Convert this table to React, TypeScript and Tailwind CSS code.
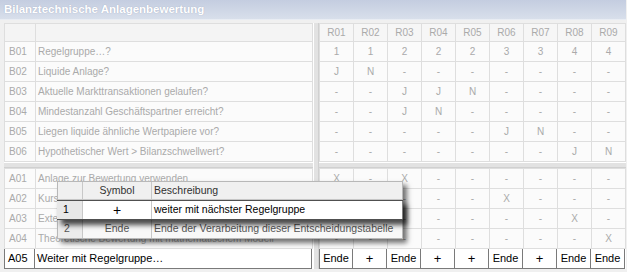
import React from "react";

const F = { fontFamily: '"Liberation Sans", Arial, sans-serif' };

const bRows: [string, string, string[]][] = [
  ["B01", "Regelgruppe…?", ["1", "1", "2", "2", "2", "3", "3", "4", "4"]],
  ["B02", "Liquide Anlage?", ["J", "N", "-", "-", "-", "-", "-", "-", "-"]],
  ["B03", "Aktuelle Markttransaktionen gelaufen?", ["-", "-", "J", "J", "N", "-", "-", "-", "-"]],
  ["B04", "Mindestanzahl Geschäftspartner erreicht?", ["-", "-", "J", "N", "-", "-", "-", "-", "-"]],
  ["B05", "Liegen liquide ähnliche Wertpapiere vor?", ["-", "-", "-", "-", "-", "J", "N", "-", "-"]],
  ["B06", "Hypothetischer Wert > Bilanzschwellwert?", ["-", "-", "-", "-", "-", "-", "-", "J", "N"]],
];

const aRows: [string, string, string[]][] = [
  ["A01", "Anlage zur Bewertung verwenden", ["X", "-", "X", "-", "-", "-", "-", "-", "-"]],
  ["A02", "Kurswert verwenden", ["-", "-", "-", "-", "-", "X", "-", "-", "-"]],
  ["A03", "Externe Bewertung verwenden", ["-", "-", "-", "-", "-", "-", "-", "X", "-"]],
  ["A04", "Theoretische Bewertung mit mathematischem Modell", ["-", "-", "-", "-", "-", "-", "-", "-", "X"]],
];

const a05 = ["Ende", "+", "Ende", "+", "+", "Ende", "+", "Ende", "Ende"];
const heads = ["R01", "R02", "R03", "R04", "R05", "R06", "R07", "R08", "R09"];

function LeftRow({ id, text, active }: { id: string; text: string; active?: boolean }) {
  if (active) {
    return (
      <div className="flex h-[21px] -mt-px text-black text-[11px] border-t border-[#7a7a7a] bg-white">
        <div className="w-[31px] border-r border-b border-l -ml-px border-[#7a7a7a] pl-[3px] flex items-center">{id}</div>
        <div className="w-[277px] border-r border-b border-[#7a7a7a] pl-[2px] flex items-center whitespace-nowrap overflow-hidden">{text}</div>
      </div>
    );
  }
  return (
    <div className="flex h-[20px] text-[#aaaaaa] bg-[#fbfbfb]">
      <div className="w-[31px] border-r border-b border-[#dedede] pl-[4px] flex items-center">{id}</div>
      <div className="w-[277px] border-r border-b border-[#dedede] pl-[2px] flex items-center whitespace-nowrap overflow-hidden">{text}</div>
    </div>
  );
}

function RightRow({ vals, active, head }: { vals: string[]; active?: boolean; head?: boolean }) {
  if (active) {
    return (
      <div className="flex h-[21px] -mt-px text-black text-[11px] bg-white border-t border-[#7a7a7a]">
        {vals.map((v, i) => (
          <div key={i} className={"w-[34px] border-r border-b border-[#7a7a7a] flex items-center justify-center " + (i === 0 ? "border-l -ml-px" : "")}>
            <span className={v === "+" ? "text-[13px] leading-none" : ""}>{v}</span>
          </div>
        ))}
      </div>
    );
  }
  return (
    <div className={"flex text-[#aaaaaa] " + (head ? "h-[18px] bg-[#f6f6f6]" : "h-[20px] bg-[#fbfbfb]")}>
      {vals.map((v, i) => (
        <div key={i} className="w-[34px] border-r border-b border-[#dedede] flex items-center justify-center">{v}</div>
      ))}
    </div>
  );
}

export default function App() {
  return (
    <div className="w-[627px] h-[272px] bg-[#f0f0f0] relative overflow-hidden text-[10px]" style={F}>
      <div className="h-[20px] w-[626px] bg-gradient-to-b from-[#c4cde0] to-[#d8dfeb] border-b border-[#e8ecf3] flex items-center pl-[4px] text-white font-bold text-[11.5px] [text-shadow:0_0_1px_rgba(120,130,160,0.6)]">
        Bilanztechnische Anlagenbewertung
      </div>
      <div className="pt-[3px] pl-[4px] grid grid-cols-[309px_6px_307px] grid-rows-[139px_6px_101px]">
        {/* top-left */}
        <div className="border-l border-t border-[#dedede]">
          <div className="flex h-[18px] bg-[#f4f4f4]">
            <div className="w-[31px] border-r border-b border-[#dedede]" />
            <div className="w-[277px] border-r border-b border-[#dedede]" />
          </div>
          {bRows.map(([id, t]) => (
            <LeftRow key={id} id={id} text={t} />
          ))}
        </div>
        {/* vertical splitter */}
        <div className="row-span-3 bg-[#e2e2e2] border-l border-white border-r border-r-[#d0d0d0]" />
        {/* top-right */}
        <div className="border-l border-t border-[#dedede]">
          <RightRow vals={heads} head />
          {bRows.map(([id, , v]) => (
            <RightRow key={id} vals={v} />
          ))}
        </div>
        {/* horizontal splitter */}
        <div className="bg-[#e2e2e2] border-t border-white border-b border-b-[#d0d0d0]" />
        <div className="bg-[#e2e2e2] border-t border-white border-b border-b-[#d0d0d0]" />
        {/* bottom-left */}
        <div className="border-l border-t border-[#dedede]">
          {aRows.map(([id, t]) => (
            <LeftRow key={id} id={id} text={t} />
          ))}
          <LeftRow id="A05" text="Weiter mit Regelgruppe…" active />
        </div>
        {/* bottom-right */}
        <div className="border-l border-t border-[#dedede]">
          {aRows.map(([id, , v]) => (
            <RightRow key={id} vals={v} />
          ))}
          <RightRow vals={a05} active />
        </div>
      </div>

      {/* popup */}
      <div className="absolute left-[57px] top-[181px] w-[346px] bg-white border border-[#b8b8b8] shadow-[4px_4px_5px_rgba(0,0,0,0.55)] text-[10.5px]">
        <div className="flex h-[18px] bg-[#f0f0f0] text-[#303030]">
          <div className="w-[25px] border-r border-b border-[#c8c8c8]" />
          <div className="w-[69px] border-r border-b border-[#c8c8c8] flex items-center justify-center">Symbol</div>
          <div className="flex-1 border-b border-[#c8c8c8] flex items-center pl-[2px]">Beschreibung</div>
        </div>
        <div className="relative z-10 flex h-[20px] -mx-px bg-white text-black border-y border-[#505050] shadow-[4px_5px_5px_rgba(0,0,0,0.7)]">
          <div className="w-[26px] bg-[#e8e8e8] border-r border-[#c8c8c8] flex items-center pl-[6px]">1</div>
          <div className="w-[69px] border-r border-[#c8c8c8] flex items-center justify-center text-[14px] leading-none">+</div>
          <div className="flex-1 flex items-center pl-[2px] whitespace-nowrap border-r border-[#808080]">weiter mit nächster Regelgruppe</div>
        </div>
        <div className="flex h-[18px] bg-[#f8f8f8] text-[#555]">
          <div className="w-[25px] bg-[#ececec] border-r border-[#c8c8c8] flex items-center pl-[6px]">2</div>
          <div className="w-[69px] border-r border-[#c8c8c8] flex items-center justify-center">Ende</div>
          <div className="flex-1 flex items-center pl-[2px] whitespace-nowrap">Ende der Verarbeitung dieser Entscheidungstabelle</div>
        </div>
      </div>
    </div>
  );
}
